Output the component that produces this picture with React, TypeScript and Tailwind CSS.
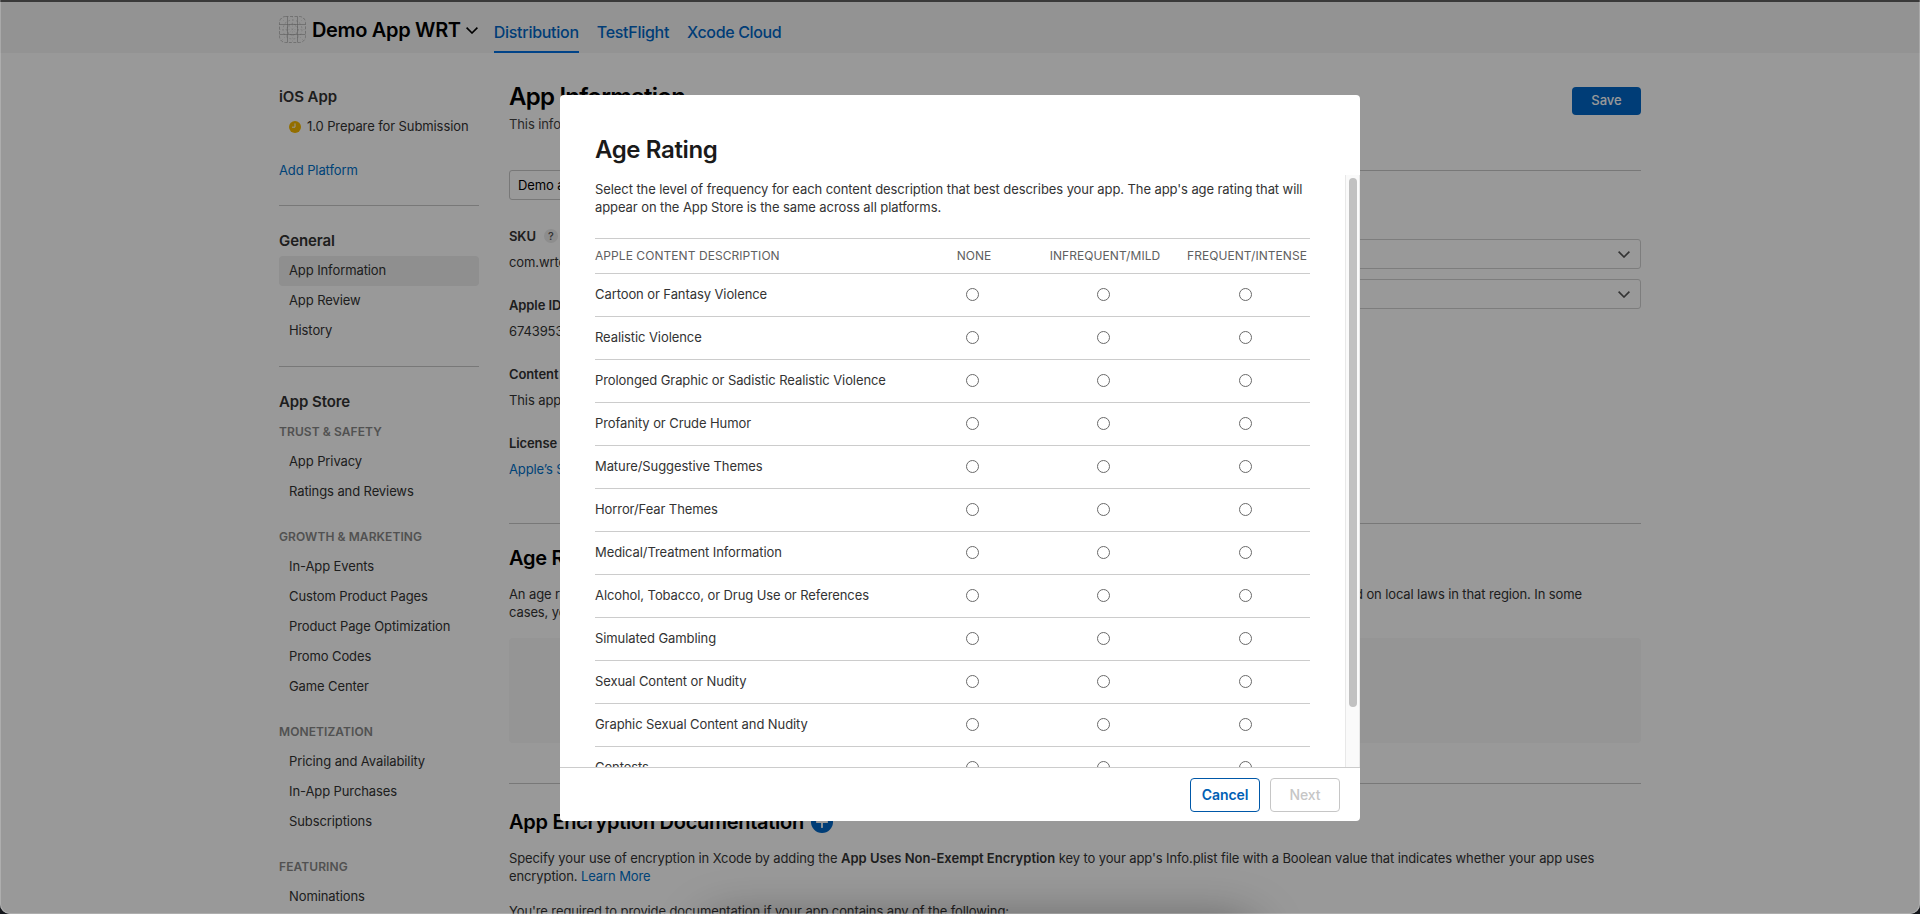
import type { ReactNode } from "react";

const groups = [
  { title: "TRUST & SAFETY", items: ["App Privacy", "Ratings and Reviews"] },
  {
    title: "GROWTH & MARKETING",
    items: ["In-App Events", "Custom Product Pages", "Product Page Optimization", "Promo Codes", "Game Center"],
  },
  { title: "MONETIZATION", items: ["Pricing and Availability", "In-App Purchases", "Subscriptions"] },
  { title: "FEATURING", items: ["Nominations"] },
];

const descriptions = [
  "Cartoon or Fantasy Violence",
  "Realistic Violence",
  "Prolonged Graphic or Sadistic Realistic Violence",
  "Profanity or Crude Humor",
  "Mature/Suggestive Themes",
  "Horror/Fear Themes",
  "Medical/Treatment Information",
  "Alcohol, Tobacco, or Drug Use or References",
  "Simulated Gambling",
  "Sexual Content or Nudity",
  "Graphic Sexual Content and Nudity",
  "Contests",
];

function Chevron({ className }: { className: string }) {
  return (
    <svg viewBox="0 0 12 7" className={className} fill="none" stroke="currentColor" strokeWidth="1.6">
      <path d="M0.6 0.6 L6 6 L11.4 0.6" />
    </svg>
  );
}

function AppGridIcon() {
  return (
    <svg viewBox="0 0 27 27" className="h-[27px] w-[27px] text-[#9a9a9a]" fill="none" stroke="currentColor" strokeWidth="0.6">
      <rect x="0.5" y="0.5" width="26" height="26" rx="6" strokeDasharray="3 1.5" />
      <path d="M8.5 0.5v26M18.5 0.5v26M0.5 8.5h26M0.5 18.5h26" />
      <path d="M13.5 0.5v26M0.5 13.5h26M2 2l23 23M25 2L2 25" strokeDasharray="1 2" strokeWidth="0.3" />
      <circle cx="13.5" cy="13.5" r="5.5" strokeDasharray="2 1" />
      <circle cx="13.5" cy="13.5" r="9.5" strokeDasharray="2 2" strokeWidth="0.4" />
    </svg>
  );
}

function NavItem({ children, active }: { children: ReactNode; active?: boolean }) {
  return (
    <li className={`flex h-[30px] items-center rounded px-2.5 ${active ? "bg-[#eeeeee]" : ""}`}>{children}</li>
  );
}

function Sidebar() {
  return (
    <nav className="w-[200px] shrink-0 pt-[29px] text-[13px] tracking-[-0.1px]">
      <h2 className="flex h-[30px] items-center text-[15px] font-semibold tracking-[-0.1px]">iOS App</h2>
      <div className="flex h-[30px] items-center gap-1.5 pl-2.5 whitespace-nowrap">
        <svg viewBox="0 0 12 12" className="h-3 w-3 shrink-0">
          <circle cx="6" cy="6" r="6" fill="#f5b800" />
          <path d="M6 2.4V6.2H3" fill="none" stroke="#fff" strokeWidth="1" />
        </svg>
        1.0 Prepare for Submission
      </div>
      <div className="mt-3.5 flex h-[30px] items-center text-[#0070c9]">Add Platform</div>
      <hr className="mt-[19px] mb-5 border-[#c9c9c9]" />
      <h2 className="flex h-[30px] items-center text-[15px] font-semibold tracking-[-0.1px]">General</h2>
      <ul>
        <NavItem active>App Information</NavItem>
        <NavItem>App Review</NavItem>
        <NavItem>History</NavItem>
      </ul>
      <hr className="my-5 border-[#c9c9c9]" />
      <h2 className="flex h-[30px] items-center text-[15px] font-semibold tracking-[-0.1px]">App Store</h2>
      {groups.map((g) => (
        <section key={g.title} className="mb-[15px]">
          <h3 className="flex h-[30px] items-center text-xs font-semibold tracking-[0.08px] text-[#888888]">{g.title}</h3>
          <ul>
            {g.items.map((i) => (
              <NavItem key={i}>{i}</NavItem>
            ))}
          </ul>
        </section>
      ))}
    </nav>
  );
}

function Field({ label, value, help, link }: { label: string; value: string; help?: boolean; link?: boolean }) {
  return (
    <div className="h-[69px] leading-[18px] whitespace-nowrap">
      <div className="flex items-center gap-2 font-semibold">
        {label}
        {help && (
          <span className="flex h-3.5 w-3.5 items-center justify-center rounded-full bg-[#ebebeb] text-[11px] leading-none font-medium text-[#555]">
            ?
          </span>
        )}
      </div>
      <div className={`mt-2 ${link ? "text-[#0070c9]" : ""}`}>{value}</div>
    </div>
  );
}

function SelectBox() {
  return (
    <div className="flex h-[30px] items-center justify-end rounded-[3px] border border-[#d0d0d0] pr-2.5 text-[#555]">
      <Chevron className="h-[7px] w-3" />
    </div>
  );
}

function MainContent() {
  return (
    <main className="w-[1132px] shrink-0 text-[13px] leading-[18px] tracking-[-0.11px]">
      <div className="flex h-[117px] justify-between">
        <div className="pt-[29px]">
          <h1 className="text-2xl leading-[29px] font-semibold tracking-[-0.75px] text-black">App Information</h1>
          <p className="mt-1 text-[#444]">This information is used for all platforms of this app.</p>
        </div>
        <button className="mt-[34px] h-7 w-[69px] rounded bg-[#0066c6] pb-0.5 text-[13px] font-medium tracking-normal text-white">
          Save
        </button>
      </div>
      <div className="flex h-[353px] justify-between">
        <div className="w-[540px]">
          <div className="flex h-[30px] items-center rounded-[3px] border border-[#c8c8c8] px-2 text-black">Demo app WRT</div>
          <div className="pt-[27px]">
            <Field label="SKU" value="com.wrto.demoapp" help />
            <Field label="Apple ID" value="6743953001" />
            <Field label="Content Rights" value="This app does not contain third-party content." />
            <Field label="License Agreement" value="Apple’s Standard License Agreement" link />
          </div>
        </div>
        <div className="flex w-[562px] flex-col gap-2.5 border-t border-[#c9c9c9] pt-[68px]">
          <SelectBox />
          <SelectBox />
        </div>
      </div>
      <section className="h-[260px] border-t border-[#c9c9c9] pt-[21px]">
        <h2 className="text-xl leading-[26px] font-semibold tracking-[-0.28px] text-black">Age Rating</h2>
        <div className="mt-3.5 w-[1073px]">
          <div className="flex justify-between whitespace-nowrap">
            <span>An age rating is shown on your product page.</span>
            <span>It may differ by region based on local laws in that region. In some</span>
          </div>
          <div>cases, your app may be unavailable.</div>
        </div>
        <div className="mt-[17px] h-[105px] rounded bg-[#f8f8f8]" />
      </section>
      <section className="border-t border-[#c9c9c9] pt-[25px]">
        <div className="flex items-center gap-[7px]">
          <h2 className="text-xl leading-[26px] font-semibold tracking-[-0.28px] text-black">App Encryption Documentation</h2>
          <svg viewBox="0 0 22 22" className="h-[22px] w-[22px]">
            <circle cx="11" cy="11" r="11" fill="#0066c6" />
            <path d="M11 5.8v10.4M5.8 11h10.4" stroke="#fff" strokeWidth="1.8" strokeLinecap="round" />
          </svg>
        </div>
        <p className="mt-3.5 whitespace-nowrap">
          Specify your use of encryption in Xcode by adding the{" "}
          <b className="font-semibold tracking-normal">App Uses Non-Exempt Encryption</b> key to your app's Info.plist file with a
          Boolean value that indicates whether your app uses
          <br />
          encryption. <span className="text-[#0070c9]">Learn More</span>
        </p>
        <p className="mt-[17px]">You're required to provide documentation if your app contains any of the following:</p>
      </section>
    </main>
  );
}

function Radio() {
  return (
    <span className="mb-0.5 flex justify-center">
      <span className="h-[13px] w-[13px] rounded-full border border-[#6a6a6a] bg-white" />
    </span>
  );
}

function AgeRatingDialog() {
  return (
    <div className="absolute top-[95px] left-[560px] flex h-[726px] w-[800px] flex-col overflow-hidden rounded-[4px] bg-white text-[13px] tracking-[-0.085px] text-[#333]">
      <h1 className="h-20 shrink-0 pt-10 pl-[35px] text-2xl leading-[29px] font-semibold tracking-[-0.38px] text-[#1a1a1a]">
        Age Rating
      </h1>
      <div className="flex min-h-0 flex-1">
        <div className="w-[785px] overflow-hidden pt-[5px] pr-[50px] pl-[35px]">
          <p className="leading-[18px] whitespace-nowrap">
            Select the level of frequency for each content description that best describes your app. The app's age rating that will
            <br />
            appear on the App Store is the same across all platforms.
          </p>
          <div className="mt-[22px] w-[715px]">
            <div className="grid h-9 grid-cols-[312px_134px_128px_141px] items-center border-y border-[#cccccc] text-xs tracking-[0.06px] text-[#606060]">
              <span>APPLE CONTENT DESCRIPTION</span>
              <span className="text-center">NONE</span>
              <span className="text-center">INFREQUENT/MILD</span>
              <span className="pr-[3px] text-right">FREQUENT/INTENSE</span>
            </div>
            {descriptions.map((d) => (
              <div key={d} className="grid h-[43px] grid-cols-[310px_134px_128px_156px] items-center border-b border-[#cccccc]">
                <span>{d}</span>
                <Radio />
                <Radio />
                <Radio />
              </div>
            ))}
          </div>
        </div>
        <div className="w-[15px] border-x border-[#e8e8e8] bg-[#fafafa] pt-[3px] pl-[3px]">
          <div className="h-[529px] w-2 rounded-full bg-[#c1c1c1]" />
        </div>
      </div>
      <footer className="flex h-[54px] shrink-0 justify-end gap-2.5 border-t border-[#cccccc] pt-2.5 pr-5 text-sm font-medium tracking-[-0.05px]">
        <button className="h-[34px] w-[70px] rounded border border-[#0058a8] font-semibold text-[#0060b4]">Cancel</button>
        <button className="h-[34px] w-[70px] rounded border border-[#c6c6c6] text-[#c6c6c6]">Next</button>
      </footer>
    </div>
  );
}

export default function App() {
  return (
    <div className="relative h-[914px] w-[1920px] overflow-hidden bg-[#14161b] font-['Inter','Liberation_Sans',sans-serif] text-[#333]">
      <div className="h-[914px] overflow-hidden rounded-b-[10px] bg-white">
        <header className="flex h-[53px] border-t-2 border-[#606060] bg-[#f6f6f6] pl-[279px]">
          <div className="flex items-start pt-3.5 text-black">
            <AppGridIcon />
            <span className="ml-1.5 pt-px text-xl leading-[27px] font-semibold tracking-[-0.33px] whitespace-nowrap">
              Demo App WRT
            </span>
            <Chevron className="mt-[11px] ml-[5px] h-[7px] w-3" />
          </div>
          <div className="ml-4 flex gap-[18px] text-base font-medium tracking-[-0.28px] whitespace-nowrap text-[#0066c6]">
            <span className="border-b-2 border-[#0071e3] pt-[18px]">Distribution</span>
            <span className="pt-[18px]">TestFlight</span>
            <span className="pt-[18px] tracking-[-0.36px]">Xcode Cloud</span>
          </div>
        </header>
        <div className="flex h-[861px] gap-[30px] overflow-hidden pl-[279px]">
          <Sidebar />
          <MainContent />
        </div>
      </div>
      <div className="absolute top-[928px] left-[710px] h-10 w-[540px] rounded-full shadow-[0_0_48px_8px_rgba(0,0,0,0.38)]" />
      <div className="absolute inset-0 rounded-b-[10px] border-x border-b border-white/20 bg-black/40" />
      <AgeRatingDialog />
    </div>
  );
}
